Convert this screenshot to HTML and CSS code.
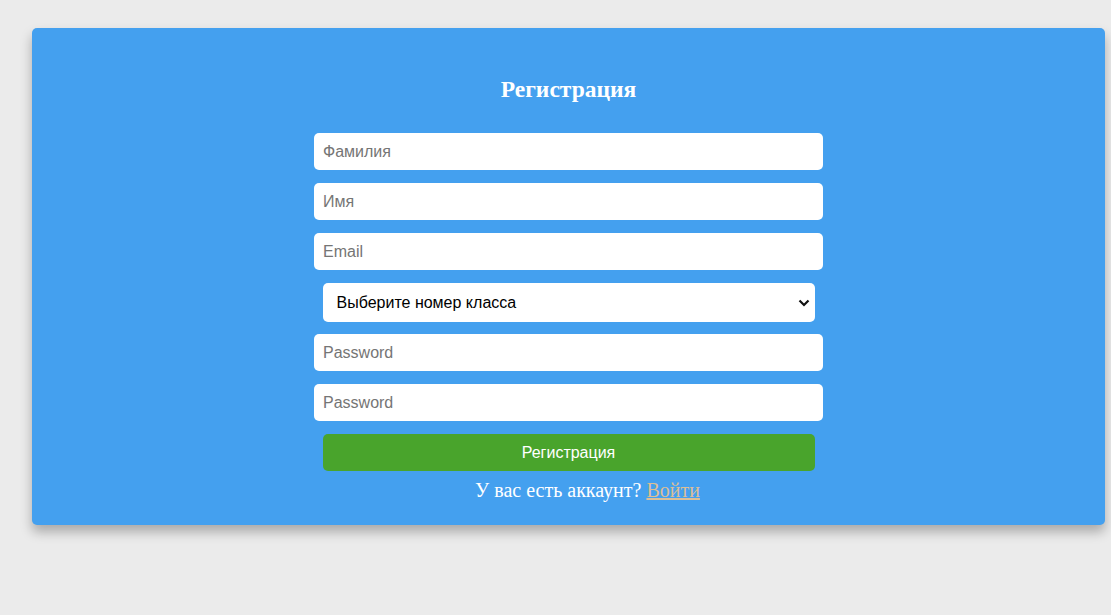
FILE: index.html
```html
<!DOCTYPE html>
<html lang="ru">
<head>
<meta charset="utf-8">
<title>Регистрация</title>
<link rel="stylesheet" href="styles.css">
</head>
<body>
<div class="card">
  <h2 class="title">Регистрация</h2>
  <form class="form">
    <input class="field" type="text" placeholder="Фамилия">
    <input class="field" type="text" placeholder="Имя">
    <input class="field" type="email" placeholder="Email">
    <div class="select-wrap">
      <select class="select">
        <option>Выберите номер класса</option>
      </select>
      <svg class="chevron" width="12" height="8" viewBox="0 0 12 8"><path d="M1.5 1.5 L6 6 L10.5 1.5" fill="none" stroke="#111" stroke-width="2.2"/></svg>
    </div>
    <input class="field" type="password" placeholder="Password">
    <input class="field" type="password" placeholder="Password">
    <button class="btn" type="button">Регистрация</button>
  </form>
  <p class="footer">У вас есть аккаунт? <a href="#" class="link">Войти</a></p>
</div>
</body>
</html>
```
FILE: styles.css
```css
html, body {
  margin: 0;
  padding: 0;
}
body {
  background: #ebebeb;
  height: 615px;
  padding-top: 28px;
  box-sizing: border-box;
}
.card {
  margin: 0 6px 0 32px;
  background: #44a0ef;
  border-radius: 5px;
  box-shadow: 0 7px 12px rgba(0, 0, 0, 0.28);
  padding: 48px 0 23px;
  font-family: "Liberation Serif", "Times New Roman", serif;
  color: #fff;
}
.title {
  margin: 0 0 31px;
  text-align: center;
  font-size: 23.5px;
  line-height: 26px;
  font-weight: bold;
}
.form {
  width: 509px;
  margin: 0 auto;
  display: flex;
  flex-direction: column;
  align-items: center;
  gap: 13px;
}
.field {
  width: 100%;
  height: 37px;
  box-sizing: border-box;
  border: none;
  border-radius: 5px;
  padding: 0 9px;
  font-family: "Liberation Sans", Arial, sans-serif;
  font-size: 16px;
  color: #000;
  background: #fff;
  outline: none;
}
.field::placeholder {
  color: #757575;
}
.select-wrap {
  position: relative;
  width: 492px;
  height: 39px;
  margin-bottom: -1px;
}
.select {
  width: 100%;
  height: 39px;
  box-sizing: border-box;
  border: none;
  border-radius: 5px;
  background: #fff;
  padding: 0 14px;
  font-family: "Liberation Sans", Arial, sans-serif;
  font-size: 16px;
  color: #000;
  appearance: none;
  -webkit-appearance: none;
  outline: none;
}
.chevron {
  position: absolute;
  right: 5px;
  top: 16px;
  pointer-events: none;
}
.btn {
  width: 492px;
  height: 37px;
  border: none;
  border-radius: 5px;
  background: #49a42c;
  color: #fff;
  font-family: "Liberation Sans", Arial, sans-serif;
  font-size: 16px;
  cursor: pointer;
}
.footer {
  margin: 7px 0 0;
  padding-left: 38px;
  text-align: center;
  font-size: 20px;
  line-height: 24px;
}
.link {
  color: #dcbf97;
}
```
